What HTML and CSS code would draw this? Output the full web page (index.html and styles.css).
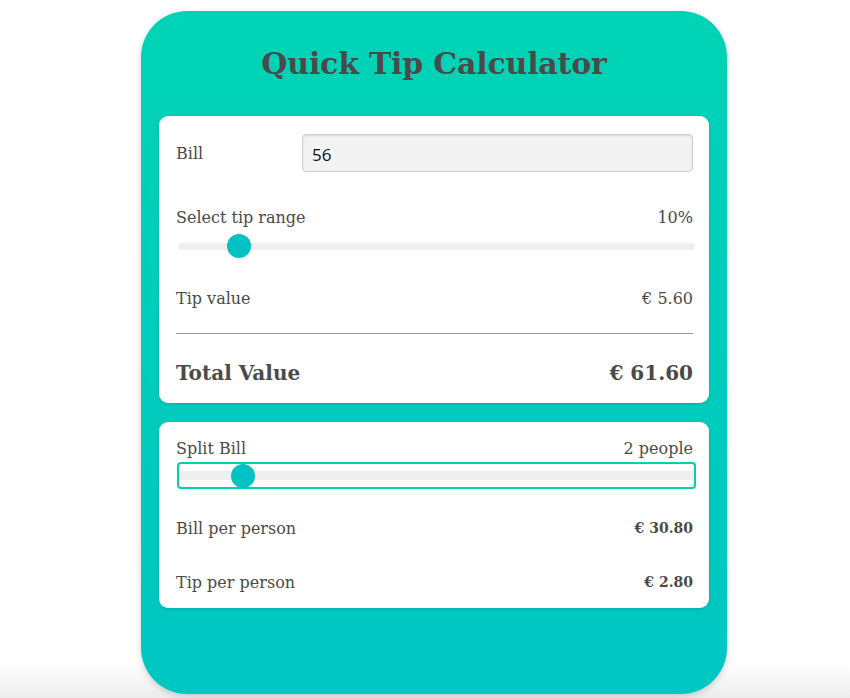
FILE: index.html
```html
<!DOCTYPE html>
<html>
<head>
<meta charset="utf-8">
<link rel="stylesheet" href="styles.css">
</head>
<body>
<main class="card">
  <h1 class="title">Quick Tip Calculator</h1>
  <section class="panel panel-main">
    <div class="row bill-row">
      <label class="label bill-label" for="bill">Bill</label>
      <input class="bill-input" id="bill" type="text" value="56">
    </div>
    <div class="row tip-head">
      <span class="label">Select tip range</span>
      <span class="value">10%</span>
    </div>
    <input class="range tip-range" type="range" min="0" max="100" value="10">
    <div class="row tip-value">
      <span class="label">Tip value</span>
      <span class="value">€ 5.60</span>
    </div>
    <hr class="divider">
    <div class="row total">
      <span class="total-label">Total Value</span>
      <span class="total-value">€ 61.60</span>
    </div>
  </section>
  <section class="panel panel-split">
    <div class="row split-head">
      <span class="label">Split Bill</span>
      <span class="value">2 people</span>
    </div>
    <div class="split-box">
      <input class="range split-range" type="range" min="0" max="19" value="2">
    </div>
    <div class="row per-row first">
      <span class="label">Bill per person</span>
      <span class="strong">€ 30.80</span>
    </div>
    <div class="row per-row second">
      <span class="label">Tip per person</span>
      <span class="strong">€ 2.80</span>
    </div>
  </section>
</main>
</body>
</html>
```

FILE: styles.css
```css
* { box-sizing: border-box; }
html, body { margin: 0; padding: 0; }
body {
  height: 698px;
  overflow: hidden;
  background: linear-gradient(to bottom, #ffffff 0, #ffffff 664px, #ececec 698px);
  font-family: "DejaVu Serif", serif;
  color: #4a4a4a;
}
.card {
  width: 586px;
  height: 683px;
  margin: 11px 0 0 141px;
  padding: 0 18px;
  border-radius: 46px;
  background: linear-gradient(to bottom, #00d3b5 0%, #00c6c2 100%);
  box-shadow: 0 2px 6px rgba(0,0,0,0.18);
  display: flex;
  flex-direction: column;
}
.title {
  margin: 0;
  height: 105px;
  display: flex;
  align-items: center;
  justify-content: center;
  padding-bottom: 0;
  font-size: 30px;
  font-weight: bold;
  color: #4a4a4a;
  letter-spacing: -0.2px;
}
.panel {
  background: #fff;
  border-radius: 9px;
  padding: 0 16px 0 17px;
  box-shadow: 0 1px 3px rgba(0,0,0,0.15);
}
.panel-main { height: 287px; padding-top: 18px; }
.panel-split { height: 186px; margin-top: 19px; padding-top: 16px; }
.row {
  display: flex;
  align-items: center;
  justify-content: space-between;
}
.label, .value { font-size: 16px; }
.bill-row { height: 38px; justify-content: flex-start; }
.bill-label { width: 126px; }
.bill-input {
  width: 391px;
  height: 38px;
  border: 1px solid #cfcfcf;
  border-radius: 4px;
  background: #f3f3f3;
  box-shadow: inset 0 1px 2px rgba(0,0,0,0.12);
  padding: 2px 9px 0;
  font-family: "Open Sans", sans-serif;
  font-size: 17px;
  color: #111;
  outline: none;
}
.tip-head { margin-top: 35px; height: 20px; }
.range {
  -webkit-appearance: none;
  appearance: none;
  display: block;
  margin: 0;
  background: transparent;
  width: 100%;
}
.range::-webkit-slider-runnable-track {
  height: 7px;
  border-radius: 4px;
  background: #eeeeee;
}
.range::-webkit-slider-thumb {
  -webkit-appearance: none;
  width: 24px;
  height: 24px;
  border-radius: 50%;
  background: #00c2c2;
  border: none;
  margin-top: -8.5px;
}
.tip-range { width: 517px; margin: 7px 0 0 2px; height: 24px; }
.tip-value { margin-top: 30px; height: 20px; }
.divider {
  margin: 25px 0 0;
  border: 0;
  border-top: 1px solid #9a9a9a;
  height: 0;
}
.total { margin-top: 26px; height: 26px; }
.total-label, .total-value { font-size: 20px; font-weight: bold; color: #4a4a4a; }
.split-head { height: 20px; }
.split-box {
  margin: 4px -3px 0 1px;
  border: 2px solid #00cfb0;
  border-radius: 4px;
  height: 27px;
  display: flex;
  align-items: center;
}
.split-range { height: 23px; }
.split-range::-webkit-slider-runnable-track { height: 9px; border-radius: 0; }
.split-range::-webkit-slider-thumb { margin-top: -7px; }
.per-row { height: 20px; }
.per-row.first { margin-top: 29px; }
.per-row.second { margin-top: 34px; }
.strong { font-size: 14px; font-weight: bold; }
```
